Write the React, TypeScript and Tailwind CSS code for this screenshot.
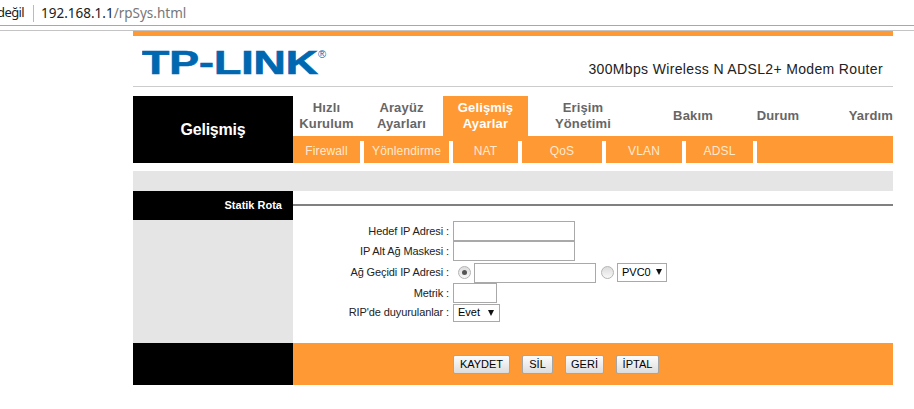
import React from 'react'

const arial = "font-['Liberation_Sans',Arial,sans-serif]"

const tabs = [
  { lines: ['Hızlı', 'Kurulum'], w: 'w-[67px]' },
  { lines: ['Arayüz', 'Ayarları'], w: 'w-[83px]' },
  { lines: ['Gelişmiş', 'Ayarlar'], w: 'w-[85px]', active: true },
  { lines: ['Erişim', 'Yönetimi'], w: 'w-[110px]' },
  { lines: ['Bakım'], w: 'w-[110px]' },
  { lines: ['Durum'], w: 'w-[60px]' },
]

const subTabs = [
  { label: 'Firewall', w: 'w-[67px]' },
  { label: 'Yönlendirme', w: 'w-[85px]' },
  { label: 'NAT', w: 'w-[65px]' },
  { label: 'QoS', w: 'w-[80px]' },
  { label: 'VLAN', w: 'w-[76px]' },
  { label: 'ADSL', w: 'w-[67px]' },
]

const Label = ({ children }: { children: React.ReactNode }) => (
  <div className="w-[160px] pr-[4px] text-right text-[11px] leading-none tracking-[-0.1px] text-[#222] whitespace-nowrap">{children}</div>
)

const TextBox = ({ w }: { w: string }) => (
  <input type="text" className={`${w} h-[20px] border border-[#a9a9a9] bg-white outline-none`} />
)

const Radio = ({ on }: { on?: boolean }) => (
  <span className="flex h-[13px] w-[13px] items-center justify-center rounded-full border border-[#b4b4b4] bg-gradient-to-b from-[#dcdcdc] to-[#f8f8f8]">
    {on && <span className="h-[5px] w-[5px] rounded-full bg-[#555]" />}
  </span>
)

const Dropdown = ({ value, w, h, arrow }: { value: string; w: string; h: string; arrow: string }) => (
  <div className={`relative ${w} ${h} flex items-center border border-[#a9a9a9] bg-white pl-[4px] text-[11px] text-black`}>
    <span>{value}</span>
    <span className={`absolute ${arrow} top-1/2 h-0 w-0 -translate-y-1/2 border-x-[3.5px] border-t-[6px] border-x-transparent border-t-[#111]`} />
  </div>
)

const Btn = ({ label, w }: { label: string; w: string }) => (
  <button className={`${w} h-[19px] rounded-[2px] border border-[#a5a5a5] bg-gradient-to-b from-[#fdfdfd] to-[#dcdcdc] text-center text-[11px] leading-none text-black`}>
    {label}
  </button>
)

export default function App() {
  return (
    <div className={`relative h-[409px] w-[914px] overflow-hidden bg-white ${arial}`}>
      {/* browser address bar */}
      <div className="flex h-[26px] items-center border-b border-[#a8a8a8] pt-[1px] font-['Noto_Sans',sans-serif] text-[13.5px] text-[#222]">
        <span className="ml-[-3px] text-[13px] tracking-[-0.6px]">değil</span>
        <span className="ml-[9px] h-[17px] w-px bg-[#bbb]" />
        <span className="ml-[7px]">192.168.1.1<span className="text-[#777]">/rpSys.html</span></span>
      </div>
      <div className="mt-[4px] h-px bg-[#c4c4c4]" />

      <div className="ml-[133px] w-[760px]">
        <div className="h-[5px] bg-[#ff9933]" />

        {/* header */}
        <div className="flex h-[51px] items-start justify-between border-b border-[#ccc]">
          <svg width="200" height="44" viewBox="0 0 200 44" className="ml-[9px] mt-[8px]">
            <text x="0" y="30" textLength="176" lengthAdjust="spacingAndGlyphs" fontFamily="Liberation Sans" fontWeight="700" fontSize="32.5" fill="#0068b0" stroke="#0068b0" strokeWidth="0.7">TP-LINK</text>
            <text x="176" y="14" fontFamily="Liberation Sans" fontSize="11" fill="#0068b0">®</text>
          </svg>
          <div className="mr-[10px] mt-[26px] text-[14px] leading-none tracking-[0.35px] text-[#222] whitespace-nowrap">300Mbps Wireless N ADSL2+ Modem Router</div>
        </div>

        {/* navigation */}
        <div className="mt-[9px] flex h-[67px]">
          <div className="flex w-[160px] items-center justify-center bg-black pt-[1px] text-[16px] font-bold tracking-[-0.2px] text-white">Gelişmiş</div>
          <div className="flex-1">
            <div className="flex h-[40px]">
              {tabs.map((t) => (
                <div
                  key={t.lines[0]}
                  className={`${t.w} flex flex-col items-center justify-center text-[13px] font-bold leading-[16px] tracking-[0.15px] ${t.active ? 'bg-[#ff9933] text-white' : 'text-[#666]'}`}
                >
                  {t.lines.map((l) => <span key={l} className="whitespace-nowrap">{l}</span>)}
                </div>
              ))}
              <div className="flex flex-1 items-center justify-end text-[13px] font-bold tracking-[0.15px] text-[#666]">Yardım</div>
            </div>
            <div className="h-[5px] bg-[#ff9933]" />
            <div className="flex h-[22px] gap-[4px]">
              {subTabs.map((s) => (
                <div key={s.label} className={`${s.w} flex items-center justify-center bg-[#ff9933] text-[12px] tracking-[0.15px] text-[#ffe9cf]`}>
                  <span className="pb-[2px]">{s.label}</span>
                </div>
              ))}
              <div className="flex-1 bg-[#ff9933]" />
            </div>
          </div>
        </div>

        <div className="mt-[8px] h-[20px] bg-[#e5e5e5]" />

        {/* section title and form */}
        <div className="flex">
          <div className="w-[160px]">
            <div className="flex h-[29px] items-center justify-end bg-black pr-[11px] text-[11px] font-bold text-white">Statik Rota</div>
            <div className="h-[123px] bg-[#e5e5e5]" />
          </div>
          <div className="flex-1">
            <div className="flex h-[29px] items-center"><div className="mb-[1px] h-[2px] w-full bg-[#808080]" /></div>
            <div className="flex flex-col pt-[1px]">
              <div className="flex h-[20px] items-center"><Label>Hedef IP Adresi :</Label><TextBox w="w-[122px]" /></div>
              <div className="flex h-[20px] items-center"><Label>IP Alt Ağ Maskesi :</Label><TextBox w="w-[122px]" /></div>
              <div className="flex h-[22px] items-center">
                <Label>Ağ Geçidi IP Adresi :</Label>
                <span className="ml-[5px]"><Radio on /></span>
                <span className="ml-[3px] mt-[2px] flex"><TextBox w="w-[122px]" /></span>
                <span className="ml-[5px]"><Radio /></span>
                <span className="ml-[3px]"><Dropdown value="PVC0" w="w-[50px]" h="h-[19px]" arrow="right-[4px]" /></span>
              </div>
              <div className="flex h-[20px] items-center"><Label>Metrik :</Label><TextBox w="w-[44px]" /></div>
              <div className="flex h-[19px] items-center"><Label>RIP'de duyurulanlar :</Label><Dropdown value="Evet" w="w-[47px]" h="h-[18px]" arrow="right-[5px]" /></div>
            </div>
          </div>
        </div>

        {/* footer */}
        <div className="flex h-[42px]">
          <div className="w-[160px] bg-black" />
          <div className="flex flex-1 items-center gap-[12px] bg-[#ff9933] pl-[160px]">
            <Btn label="KAYDET" w="w-[57px]" />
            <Btn label="SİL" w="w-[31px]" />
            <Btn label="GERİ" w="w-[39px]" />
            <Btn label="İPTAL" w="w-[43px]" />
          </div>
        </div>
      </div>
    </div>
  )
}
